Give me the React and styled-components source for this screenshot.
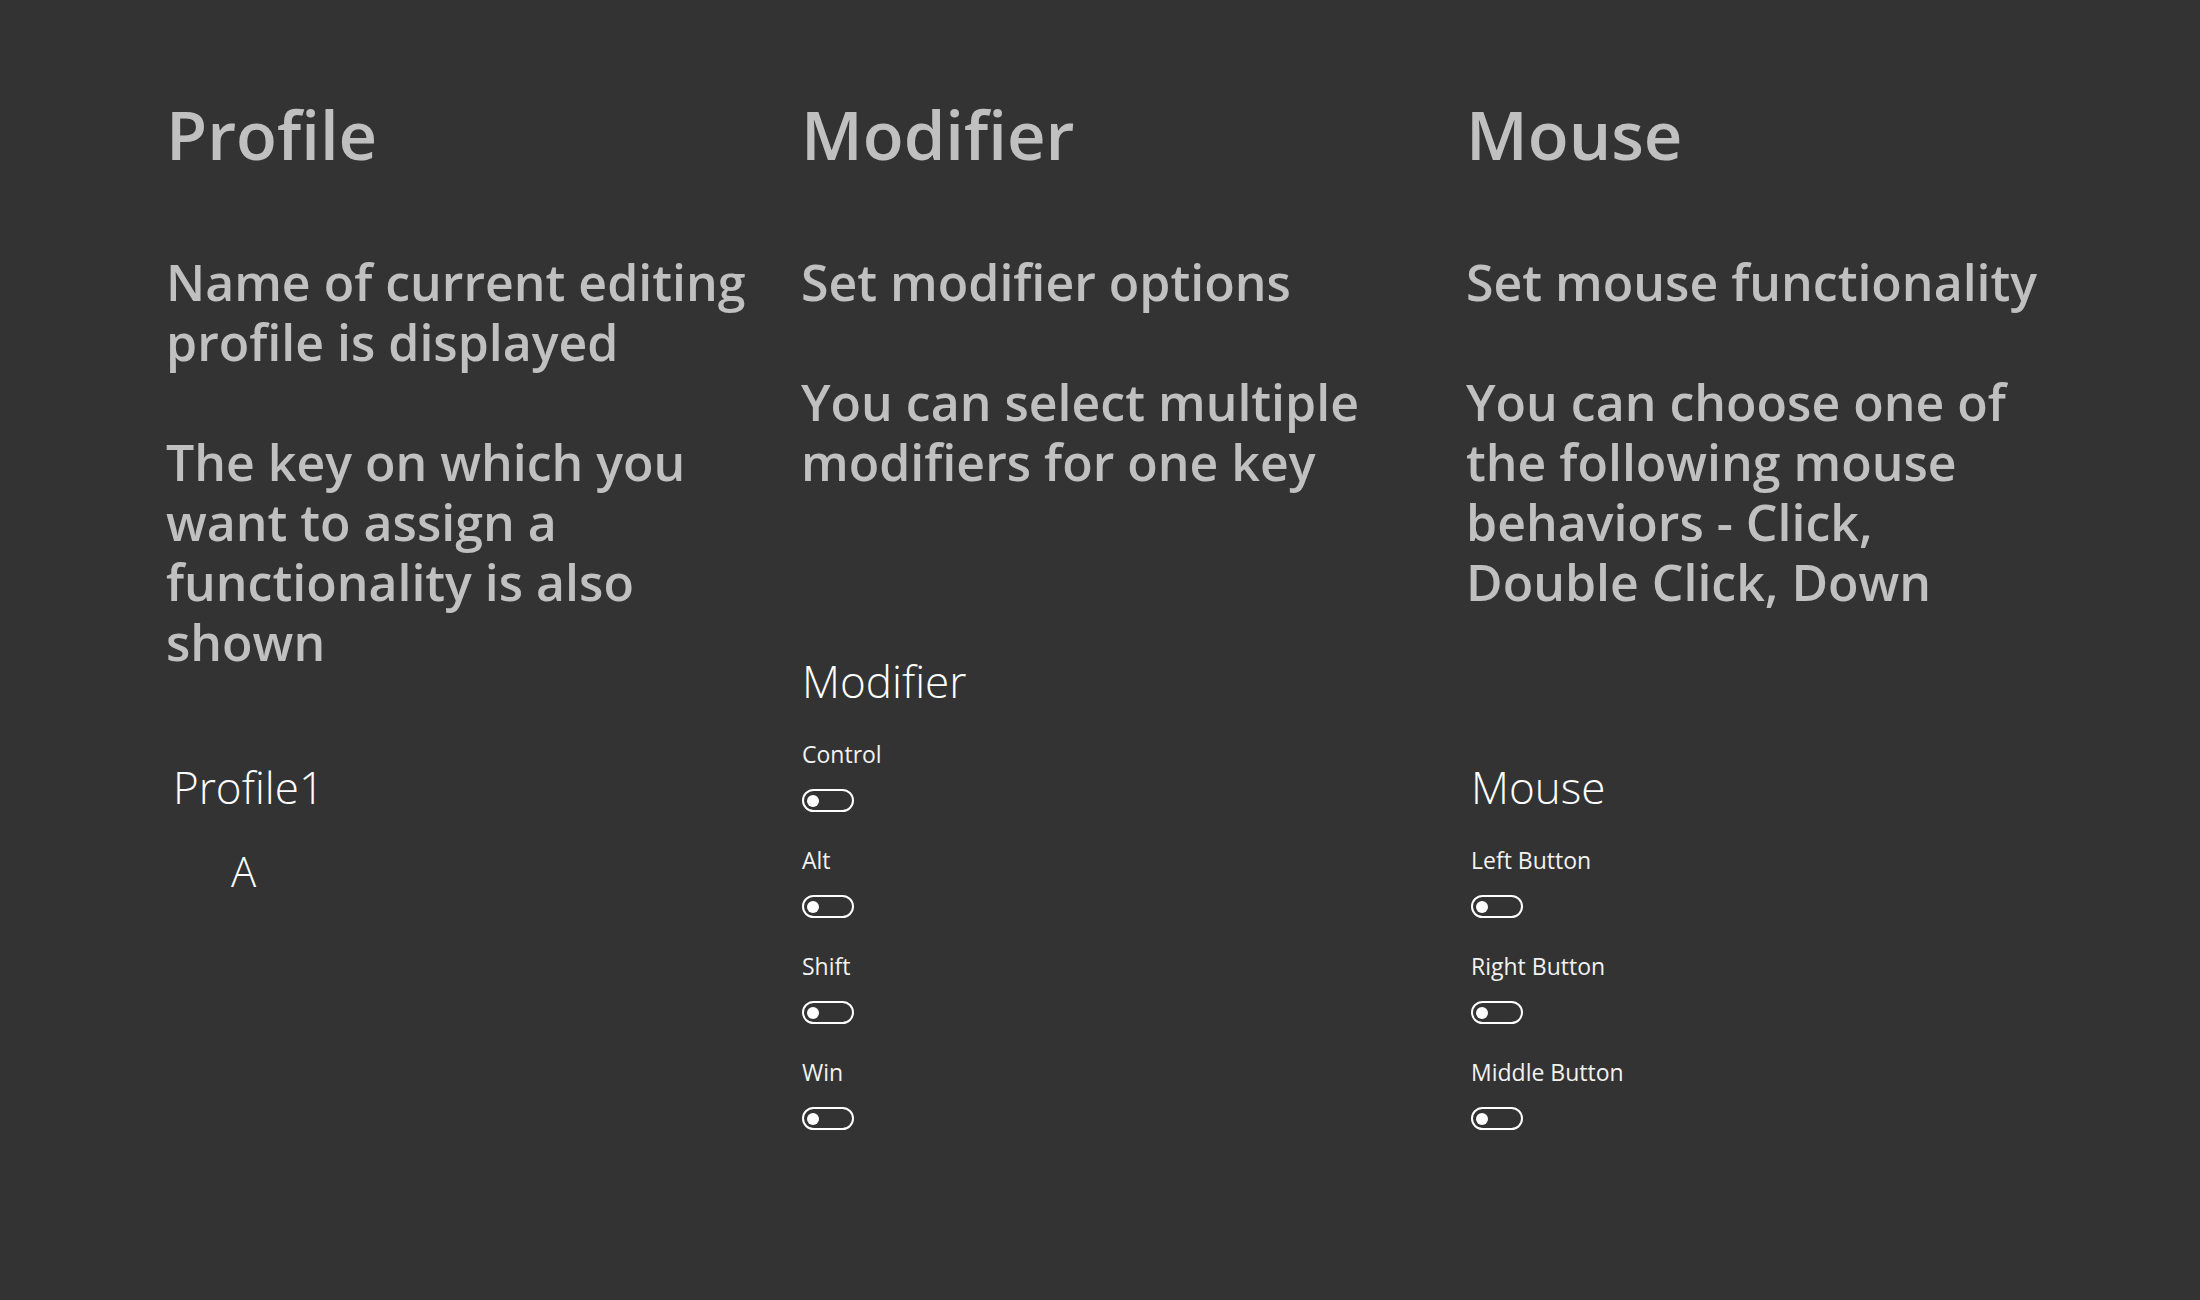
import React from 'react';
import styled, { createGlobalStyle } from 'styled-components';

const GlobalStyle = createGlobalStyle`
  html, body { margin: 0; padding: 0; background: #333333; }
  body { font-family: "Open Sans", "Noto Sans", sans-serif; }
`;

const Page = styled.main`
  min-height: 1300px;
  box-sizing: border-box;
  background: #333333;
  padding: 96px 0 0 166px;
  display: grid;
  grid-template-columns: 635px 665px 1fr;
  align-items: start;
`;

const Column = styled.section`
  display: flex;
  flex-direction: column;
`;

const Title = styled.h1`
  margin: 0;
  font-family: "Open Sans", sans-serif;
  font-weight: 600;
  font-size: 67px;
  line-height: 77px;
  color: #c0c0c0;
`;

const Description = styled.div`
  margin-top: 79px;
  display: flex;
  flex-direction: column;
  gap: 60px;
`;

const Paragraph = styled.p`
  margin: 0;
  font-family: "Open Sans", sans-serif;
  font-weight: 600;
  font-size: 50px;
  line-height: 60px;
  color: #c0c0c0;
  white-space: pre-line;
`;

const Panel = styled.div`
  margin-top: ${(p) => p.$top}px;
  margin-left: ${(p) => p.$indent}px;
  display: flex;
  flex-direction: column;
`;

const PanelTitle = styled.h2`
  margin: 0;
  font-family: "Open Sans", sans-serif;
  font-weight: 300;
  font-size: 44px;
  line-height: 60px;
  color: #ffffff;
`;

const KeyName = styled.div`
  margin: 28px 0 0 58px;
  font-family: "Open Sans", sans-serif;
  font-weight: 300;
  font-size: 42px;
  line-height: 52px;
  color: #ffffff;
`;

const OptionList = styled.div`
  margin-top: 28px;
  display: flex;
  flex-direction: column;
  gap: 33px;
`;

const Option = styled.label`
  display: flex;
  flex-direction: column;
  align-items: flex-start;
  gap: 20px;
`;

const OptionLabel = styled.span`
  font-family: "Open Sans", sans-serif;
  font-weight: 400;
  font-size: 23px;
  line-height: 30px;
  color: #f2f2f2;
`;

const Toggle = styled.span`
  box-sizing: border-box;
  width: 52px;
  height: 23px;
  border: 2px solid #ffffff;
  border-radius: 12px;
  display: flex;
  align-items: center;
  padding-left: 3px;
`;

const Knob = styled.span`
  width: 12px;
  height: 12px;
  border-radius: 50%;
  background: #ffffff;
`;

const Lines = ({ lines }) => <Paragraph>{lines.join('\n')}</Paragraph>;

const Switch = ({ label }) => (
  <Option>
    <OptionLabel>{label}</OptionLabel>
    <Toggle>
      <Knob />
    </Toggle>
  </Option>
);

export default function App() {
  return (
    <>
      <GlobalStyle />
      <Page>
        <Column>
          <Title>Profile</Title>
          <Description>
            <Lines lines={['Name of current editing', 'profile is displayed']} />
            <Lines
              lines={[
                'The key on which you',
                'want to assign a',
                'functionality is also',
                'shown',
              ]}
            />
          </Description>
          <Panel $top={85} $indent={7}>
            <PanelTitle>Profile1</PanelTitle>
            <KeyName>A</KeyName>
          </Panel>
        </Column>
        <Column>
          <Title>Modifier</Title>
          <Description>
            <Lines lines={['Set modifier options']} />
            <Lines lines={['You can select multiple', 'modifiers for one key']} />
          </Description>
          <Panel $top={159} $indent={1}>
            <PanelTitle>Modifier</PanelTitle>
            <OptionList>
              {['Control', 'Alt', 'Shift', 'Win'].map((m) => (
                <Switch key={m} label={m} />
              ))}
            </OptionList>
          </Panel>
        </Column>
        <Column>
          <Title>Mouse</Title>
          <Description>
            <Lines lines={['Set mouse functionality']} />
            <Lines
              lines={[
                'You can choose one of',
                'the following mouse',
                'behaviors - Click,',
                'Double Click, Down',
              ]}
            />
          </Description>
          <Panel $top={145} $indent={5}>
            <PanelTitle>Mouse</PanelTitle>
            <OptionList>
              {['Left Button', 'Right Button', 'Middle Button'].map((m) => (
                <Switch key={m} label={m} />
              ))}
            </OptionList>
          </Panel>
        </Column>
      </Page>
    </>
  );
}
